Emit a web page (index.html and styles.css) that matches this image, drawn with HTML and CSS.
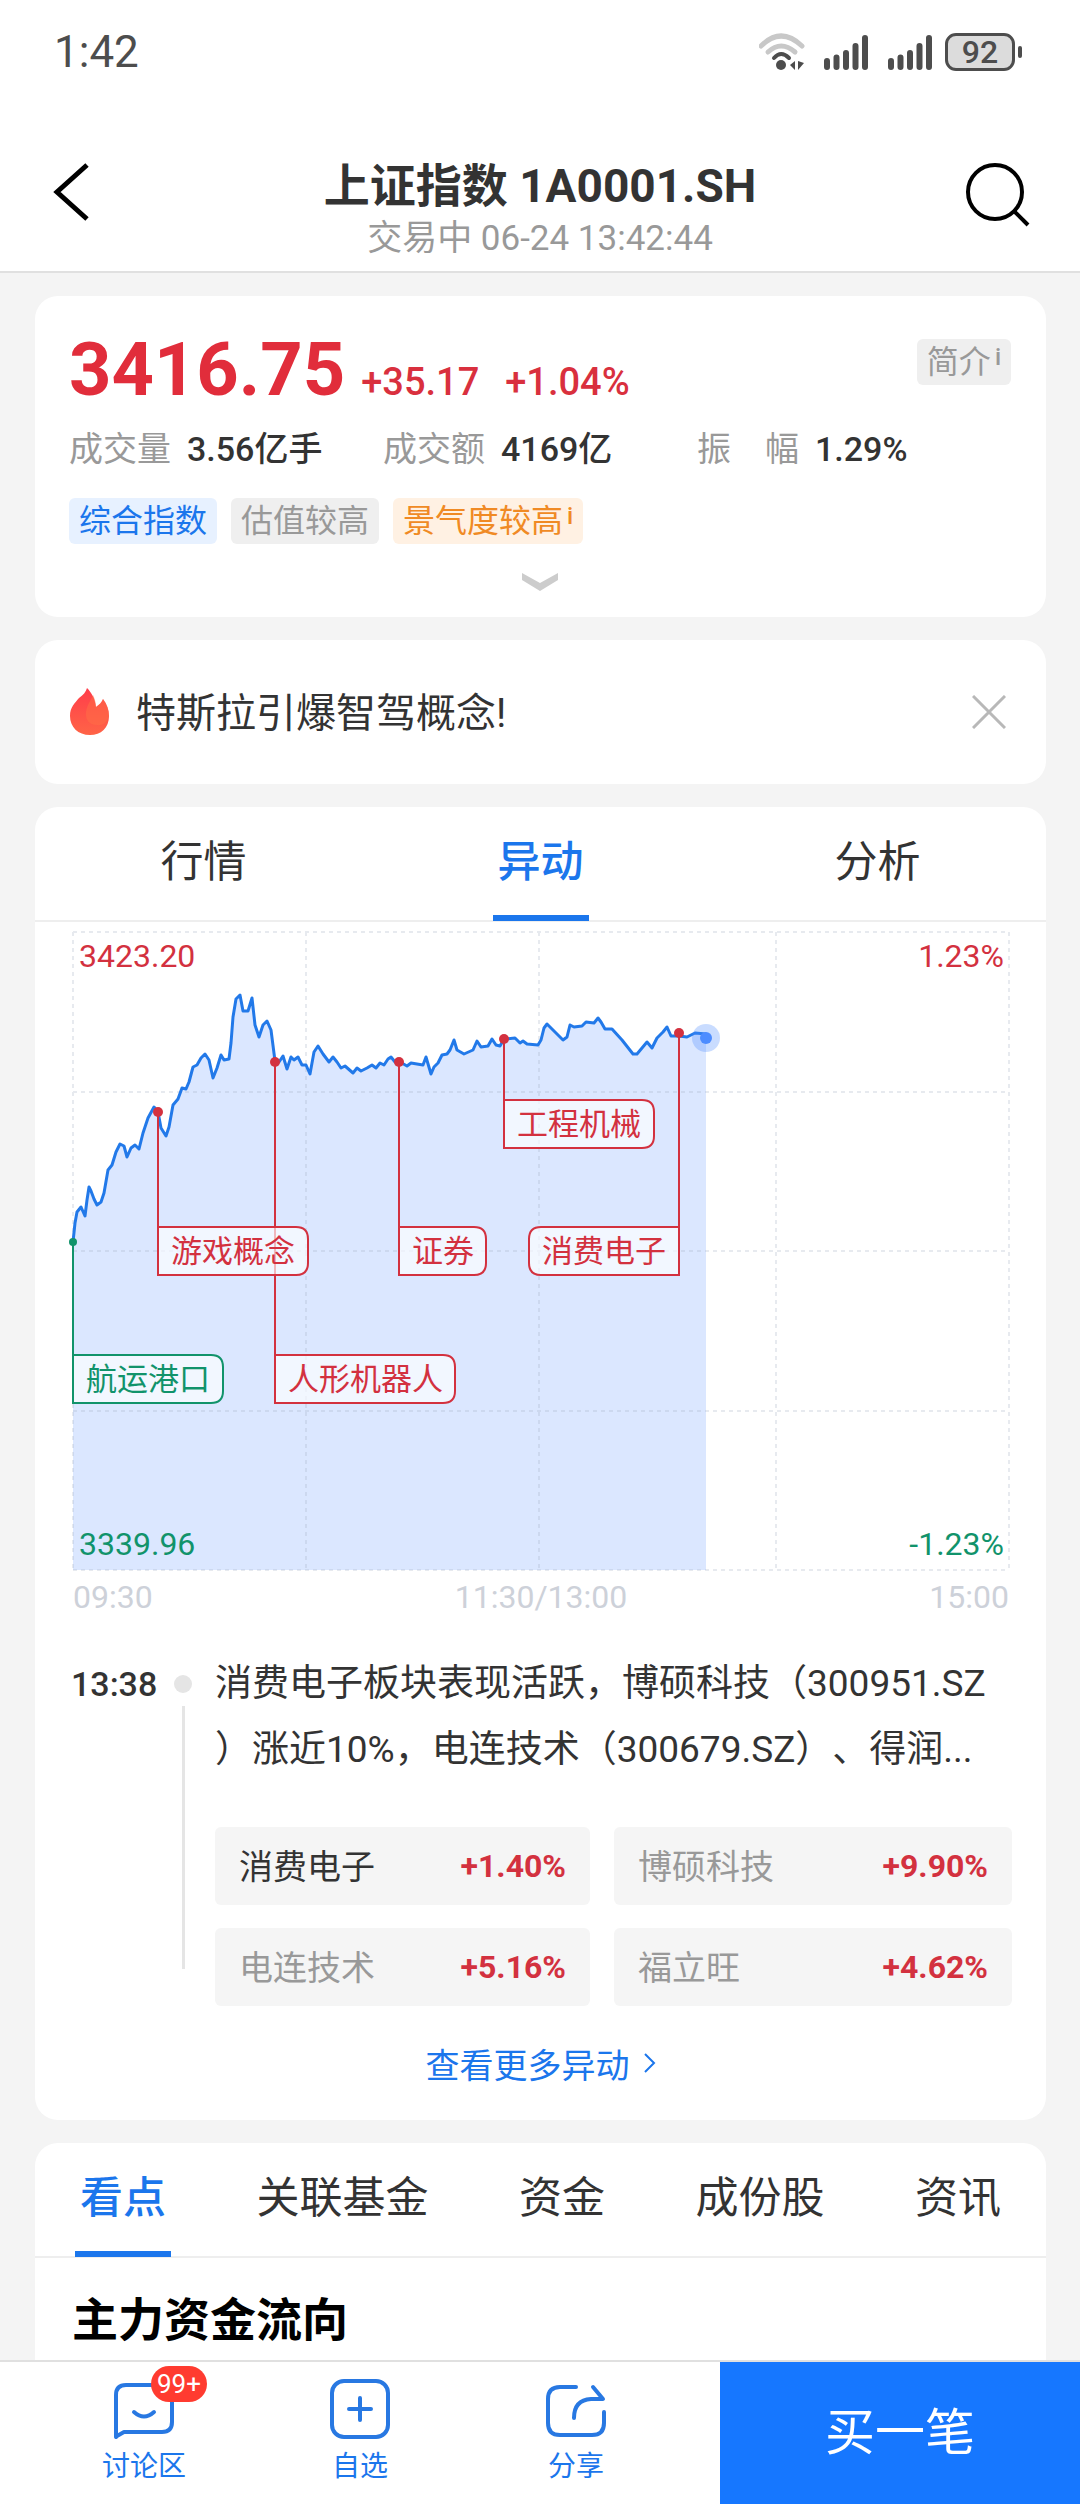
FILE: index.html
```html
<!DOCTYPE html>
<html lang="zh-CN">
<head>
    <meta charset="UTF-8">
    <meta name="viewport" content="width=device-width, initial-scale=1.0">
    <title>上证指数 1A0001.SH</title>
    <link rel="stylesheet" href="styles.css">
</head>
<body>
    <div class="status-bar">
        <span class="clock">1:42</span>
        <div class="status-icons">
            <svg width="46" height="38" viewBox="0 0 46 38" fill="none" stroke-linecap="round">
                <path d="M2 13Q22 -7 43 13" stroke="#c8c8c8" stroke-width="5"/>
                <path d="M9 19Q22 7 36 19" stroke="#c8c8c8" stroke-width="5"/>
                <path d="M15 25Q22 17 30 25" stroke="#4d4d4d" stroke-width="4"/>
                <circle cx="22" cy="32" r="5" fill="#4d4d4d"/>
                <path d="M36 28v9l-5-5zM39 28v9l6-7z" fill="#4d4d4d"/>
            </svg>
            <svg width="46" height="38" viewBox="0 0 46 38" stroke="#4d4d4d" stroke-width="6" stroke-linecap="round">
                <path d="M4 28v6M13.500 24.500v9.500M23 20v14M32.500 13v21M42 5v29"/>
            </svg>
            <svg class="signal-2" width="46" height="38" viewBox="0 0 46 38" stroke="#4d4d4d" stroke-width="6" stroke-linecap="round">
                <path d="M4 28v6M13.500 24.500v9.500M23 20v14M32.500 13v21M42 5v29"/>
            </svg>
            <div class="battery">92</div>
        </div>
    </div>

    <header class="nav">
        <button class="icon-btn" aria-label="返回">
            <svg width="66" height="66" viewBox="0 0 66 66" fill="none" stroke="#000" stroke-width="5">
                <path d="M37 3L7 30L37 57"/>
            </svg>
        </button>
        <div class="nav-title">
            <h1>上证指数 1A0001.SH</h1>
            <p>交易中 06-24 13:42:44</p>
        </div>
        <button class="icon-btn" aria-label="搜索">
            <svg width="66" height="66" viewBox="0 0 66 66" fill="none" stroke="#000" stroke-width="4">
                <circle cx="31" cy="30" r="27"/>
                <path d="M50 49L64 63"/>
            </svg>
        </button>
    </header>

    <main>
        <section class="card quote">
            <div class="quote-head">
                <span class="price">3416.75</span>
                <span class="change">+35.17</span>
                <span class="change">+1.04%</span>
                <button class="tag tag-gray intro">简介<sup>i</sup></button>
            </div>
            <dl class="stats">
                <div><dt>成交量</dt><dd>3.56亿手</dd></div>
                <div><dt>成交额</dt><dd>4169亿</dd></div>
                <div><dt>振　幅</dt><dd>1.29%</dd></div>
            </dl>
            <div class="tags">
                <span class="tag tag-blue">综合指数</span>
                <span class="tag tag-gray">估值较高</span>
                <span class="tag tag-orange">景气度较高<sup>i</sup></span>
            </div>
            <button class="expand" aria-label="展开">
                <svg width="36" height="18" viewBox="0 0 36 18" fill="#ccc">
                    <path d="M0 0L18 10L36 0V7L18 18L0 7z"/>
                </svg>
            </button>
        </section>

        <section class="card notice">
            <svg width="42" height="50" viewBox="0 0 42 50">
                <defs>
                    <linearGradient id="fire" x1="0" y1="0" x2="0" y2="1">
                        <stop offset="0" stop-color="#ff3d4a"/>
                        <stop offset="1" stop-color="#ff6447"/>
                    </linearGradient>
                </defs>
                <path d="M18 1C22 5 26 11 27 20C30 18 33 15 34 12C38 17 40 23 40 29C40 41 32 48 21 48C9 48 1 40 1 29C1 20 6 16 10 11C14 8 17 5 18 1z" fill="url(#fire)"/>
                <path d="M27 20C30 18 33 15 34 12C38 17 40 23 40 29C38 36 33 39 28 38C20 38 16 32 17 25C18 18 22 13 24 8C26 12 27 16 27 20z" fill="#ff7046" opacity=".5"/>
            </svg>
            <a href="#">特斯拉引爆智驾概念!</a>
            <button class="close" aria-label="关闭">
                <svg width="34" height="34" viewBox="0 0 34 34" stroke="#b8b8b8" stroke-width="3">
                    <path d="M1 1L33 33M33 1L1 33"/>
                </svg>
            </button>
        </section>

        <section class="card">
            <nav class="tabs">
                <button>行情</button>
                <button class="active">异动</button>
                <button>分析</button>
            </nav>

            <div class="chart">
                <svg viewBox="0 0 936 638">
                    <path class="area" d="M0 310L2 291L4 280L8 275L12 284L14 268L16 255L18 259L21 267L24 273L28 270L31 261L35 238L39 233L43 220L47 212L51 214L54 225L58 216L62 213L66 217L70 201L75 186L81 175L85 180L88 196L93 204L96 195L100 173L105 167L109 156L113 157L116 150L120 135L124 133L128 126L132 122L136 128L140 146L144 136L148 123L151 128L156 127L158 111L160 85L163 67L167 63L170 79L175 79L179 66L182 93L186 105L190 93L194 89L198 98L202 129L206 130L210 124L214 137L218 125L221 128L225 125L229 133L233 133L237 142L241 120L245 114L250 122L256 130L260 125L264 130L268 136L272 134L280 141L284 136L288 139L294 136L299 133L303 136L307 131L311 133L315 127L318 125L322 130L327 130L334 134L338 131L350 133L353 125L358 142L361 135L365 131L369 123L374 122L377 118L381 108L384 118L391 122L400 118L404 109L408 115L415 114L419 107L423 113L427 114L431 107L442 106L447 111L450 109L454 112L465 113L468 108L471 96L474 92L490 108L494 105L497 93L501 95L509 94L513 90L521 91L525 86L528 90L532 97L539 97L549 108L560 122L564 122L574 110L579 116L584 106L590 100L594 95L598 104L606 104L614 105L622 101L633 102V638H0z"/>
                    <path class="grid" d="M0 0H936M0 160H936M0 319H936M0 479H936M0 638H936M0 0V638M233 0V638M466 0V638M703 0V638M936 0V638"/>
                    <polyline class="line" points="0,310 2,291 4,280 8,275 12,284 14,268 16,255 18,259 21,267 24,273 28,270 31,261 35,238 39,233 43,220 47,212 51,214 54,225 58,216 62,213 66,217 70,201 75,186 81,175 85,180 88,196 93,204 96,195 100,173 105,167 109,156 113,157 116,150 120,135 124,133 128,126 132,122 136,128 140,146 144,136 148,123 151,128 156,127 158,111 160,85 163,67 167,63 170,79 175,79 179,66 182,93 186,105 190,93 194,89 198,98 202,129 206,130 210,124 214,137 218,125 221,128 225,125 229,133 233,133 237,142 241,120 245,114 250,122 256,130 260,125 264,130 268,136 272,134 280,141 284,136 288,139 294,136 299,133 303,136 307,131 311,133 315,127 318,125 322,130 327,130 334,134 338,131 350,133 353,125 358,142 361,135 365,131 369,123 374,122 377,118 381,108 384,118 391,122 400,118 404,109 408,115 415,114 419,107 423,113 427,114 431,107 442,106 447,111 450,109 454,112 465,113 468,108 471,96 474,92 490,108 494,105 497,93 501,95 509,94 513,90 521,91 525,86 528,90 532,97 539,97 549,108 560,122 564,122 574,110 579,116 584,106 590,100 594,95 598,104 606,104 614,105 622,101 633,102"/>
                    <circle class="halo" cx="633" cy="106" r="14"/>
                    <circle class="now" cx="633" cy="106" r="6"/>

                    <g class="flag up">
                        <path d="M202 130V471H370Q382 471 382 459V435Q382 423 370 423H202"/>
                        <circle cx="202" cy="130" r="5"/>
                        <text x="215" y="458">人形机器人</text>
                    </g>
                    <g class="flag up">
                        <path d="M85 180V343H223Q235 343 235 331V307Q235 295 223 295H85"/>
                        <circle cx="85" cy="180" r="5"/>
                        <text x="98" y="330">游戏概念</text>
                    </g>
                    <g class="flag up">
                        <path d="M326 130V343H401Q413 343 413 331V307Q413 295 401 295H326"/>
                        <circle cx="326" cy="130" r="5"/>
                        <text x="339" y="330">证券</text>
                    </g>
                    <g class="flag up">
                        <path d="M431 107V216H569Q581 216 581 204V180Q581 168 569 168H431"/>
                        <circle cx="431" cy="107" r="5"/>
                        <text x="444" y="203">工程机械</text>
                    </g>
                    <g class="flag up">
                        <path d="M606 101V343H468Q456 343 456 331V307Q456 295 468 295H606"/>
                        <circle cx="606" cy="101" r="5"/>
                        <text x="469" y="330">消费电子</text>
                    </g>
                    <g class="flag down">
                        <path d="M0 310V471H138Q150 471 150 459V435Q150 423 138 423H0"/>
                        <circle cx="0" cy="310" r="4"/>
                        <text x="13" y="458">航运港口</text>
                    </g>

                    <text class="scale up" x="6" y="35">3423.20</text>
                    <text class="scale up end" x="931" y="35">1.23%</text>
                    <text class="scale down" x="6" y="623">3339.96</text>
                    <text class="scale down end" x="931" y="623">-1.23%</text>
                </svg>
                <div class="axis">
                    <span>09:30</span>
                    <span>11:30/13:00</span>
                    <span>15:00</span>
                </div>
            </div>

            <div class="event">
                <time>13:38</time>
                <div class="timeline"></div>
                <div class="event-body">
                    <p>消费电子板块表现活跃，博硕科技（300951.SZ）涨近10%，电连技术（300679.SZ）、得润...</p>
                    <div class="stocks">
                        <a href="#" class="sector"><span>消费电子</span><b>+1.40%</b></a>
                        <a href="#"><span>博硕科技</span><b>+9.90%</b></a>
                        <a href="#"><span>电连技术</span><b>+5.16%</b></a>
                        <a href="#"><span>福立旺</span><b>+4.62%</b></a>
                    </div>
                </div>
            </div>
            <a href="#" class="more">查看更多异动
                <svg width="12" height="20" viewBox="0 0 12 20" fill="none" stroke="#1b76ec" stroke-width="2">
                    <path d="M1 1L10 10L1 19"/>
                </svg>
            </a>
        </section>

        <section class="card info">
            <nav class="tabs tabs-scroll">
                <button class="active">看点</button>
                <button>关联基金</button>
                <button>资金</button>
                <button>成份股</button>
                <button>资讯</button>
            </nav>
            <h2>主力资金流向</h2>
        </section>
    </main>

    <footer class="bottom-bar">
        <div class="actions">
            <button>
                <span class="icon">
                    <svg width="60" height="60" viewBox="0 0 60 60">
                        <path d="M2 58V16Q2 6 12 6H48Q58 6 58 16V43Q58 53 48 53H10L3 57z"/>
                        <path d="M20 33Q30 42 40 33"/>
                    </svg>
                    <span class="badge">99+</span>
                </span>
                讨论区
            </button>
            <button>
                <span class="icon">
                    <svg width="60" height="60" viewBox="0 0 60 60">
                        <rect x="2" y="2" width="56" height="56" rx="12"/>
                        <path d="M30 19V41M19 30H41"/>
                    </svg>
                </span>
                自选
            </button>
            <button>
                <span class="icon">
                    <svg width="60" height="60" viewBox="0 0 60 60">
                        <path d="M30 8H14Q2 8 2 20V44Q2 56 14 56H46Q58 56 58 44V33"/>
                        <path d="M47 8L57 20H45Q28 21 28 39"/>
                    </svg>
                </span>
                分享
            </button>
        </div>
        <button class="buy">买一笔</button>
    </footer>
</body>
</html>
```
FILE: styles.css
```css
* {
    margin: 0;
    padding: 0;
    box-sizing: border-box;
}
body {
    min-height: 100vh;
    display: flex;
    flex-direction: column;
    background: #f4f4f4;
    color: #333;
    font-family: Roboto, "Noto Sans CJK SC", sans-serif;
    font-size: 34px;
}
button {
    border: none;
    background: none;
    color: inherit;
    font-family: inherit;
    font-size: inherit;
    cursor: pointer;
}
a {
    color: inherit;
    text-decoration: none;
}
svg {
    display: block;
}

/* status bar */
.status-bar {
    display: flex;
    justify-content: space-between;
    align-items: center;
    height: 104px;
    padding: 0 65px 0 54px;
    background: #fff;
    color: #4d4d4d;
}
.clock {
    font-size: 44px;
}
.status-icons {
    display: flex;
    align-items: center;
    gap: 18px;
}
.signal-2 {
    margin-right: -6px;
}
.battery {
    position: relative;
    width: 70px;
    height: 38px;
    border: 3px solid #4d4d4d;
    border-radius: 11px;
    background: #dcdcdc;
    font-size: 32px;
    font-weight: 500;
    line-height: 33px;
    text-align: center;
}
.battery::after {
    content: "";
    position: absolute;
    top: 10px;
    right: -10px;
    width: 4px;
    height: 12px;
    border-radius: 2px;
    background: #4d4d4d;
}

/* title bar */
.nav {
    display: flex;
    justify-content: space-between;
    height: 169px;
    padding: 58px 50px 0;
    border-bottom: 2px solid #e0e0e0;
    background: #fff;
}
.icon-btn {
    width: 66px;
    height: 66px;
}
.nav-title {
    text-align: center;
}
.nav-title h1 {
    font-size: 46px;
    font-weight: 700;
    line-height: 48px;
}
.nav-title p {
    margin-top: 6px;
    color: #999;
    font-size: 35px;
    line-height: 46px;
}

main {
    flex: 1;
    display: flex;
    flex-direction: column;
    gap: 23px;
    padding: 23px 34px 0 35px;
}
.card {
    border-radius: 23px;
    background: #fff;
}

/* quote */
.quote {
    padding: 43px 35px 26px 34px;
}
.quote-head {
    display: flex;
    align-items: flex-end;
    height: 62px;
    color: #d9303e;
}
.price {
    margin-right: 16px;
    color: #e12d3b;
    font-size: 74px;
    font-weight: 700;
    line-height: 62px;
}
.change {
    margin-right: 26px;
    font-size: 38px;
    font-weight: 500;
    line-height: 38px;
}
.intro {
    align-self: flex-start;
    margin-left: auto;
}
.stats {
    display: grid;
    grid-template-columns: repeat(3, 1fr);
    margin-top: 25px;
    line-height: 46px;
}
.stats div {
    display: flex;
    gap: 16px;
}
.stats dt {
    color: #999;
}
.stats dd {
    font-weight: 500;
}
.tags {
    display: flex;
    gap: 14px;
    margin-top: 26px;
}
.tag {
    height: 46px;
    padding: 0 10px;
    border-radius: 6px;
    font-size: 32px;
    line-height: 46px;
    white-space: nowrap;
}
.tag sup {
    margin-left: 4px;
    font-size: 24px;
    font-weight: 500;
    line-height: 24px;
    vertical-align: 8px;
}
.tag-blue {
    background: #e7f1ff;
    color: #1b76ec;
}
.tag-gray {
    background: #efefef;
    color: #999;
}
.tag-orange {
    background: #fff1e3;
    color: #f08a24;
}
.expand {
    display: block;
    margin: 29px auto 0;
}

/* notice */
.notice {
    display: flex;
    align-items: center;
    height: 144px;
    padding: 0 40px 0 34px;
}
.notice a {
    flex: 1;
    margin-left: 25px;
    padding-bottom: 4px;
    font-size: 40px;
}

/* tabs */
.tabs {
    display: flex;
    height: 115px;
    border-bottom: 2px solid #eee;
}
.tabs button {
    position: relative;
    flex: 1;
    height: 114px;
    padding-bottom: 12px;
    font-size: 43px;
}
.tabs .active {
    color: #1b76ec;
    font-weight: 500;
}
.tabs .active::after {
    content: "";
    position: absolute;
    bottom: 0;
    left: 50%;
    width: 96px;
    height: 6px;
    margin-left: -48px;
    background: #1b76ec;
}
.tabs-scroll {
    justify-content: space-between;
    padding: 0 45px;
}
.tabs-scroll button {
    flex: none;
}

/* chart */
.chart {
    padding: 10px 37px 0 38px;
}
.chart svg {
    width: 100%;
    overflow: visible;
}
.area {
    fill: #dbe7ff;
}
.grid {
    fill: none;
    stroke: #a0aabe;
    stroke-opacity: .25;
    stroke-width: 2;
    stroke-dasharray: 4 4;
}
.line {
    fill: none;
    stroke: #2279e9;
    stroke-width: 3;
    stroke-linejoin: round;
}
.halo {
    fill: #4d8cff;
    opacity: .3;
}
.now {
    fill: #4d8cff;
}
.flag path {
    fill: #fff;
    fill-opacity: .65;
    stroke: currentColor;
    stroke-width: 2;
}
.flag circle, .flag text {
    fill: currentColor;
}
.flag text {
    font-size: 31px;
}
.up {
    color: #d3313f;
}
.down {
    color: #11936b;
}
.scale {
    fill: currentColor;
    font-size: 32px;
}
.end {
    text-anchor: end;
}
.axis {
    display: flex;
    justify-content: space-between;
    margin-top: 8px;
    color: #cdd1d9;
    font-size: 32px;
    line-height: 38px;
}

/* event */
.event {
    display: flex;
    margin-top: 35px;
    padding: 0 34px 0 36px;
}
.event time {
    width: 103px;
    font-weight: 500;
    line-height: 66px;
}
.timeline {
    display: flex;
    flex-direction: column;
    align-items: center;
    gap: 13px;
    width: 18px;
    margin: 24px 23px 37px 0;
}
.timeline::before {
    content: "";
    width: 18px;
    height: 18px;
    border-radius: 50%;
    background: #e5e5e5;
}
.timeline::after {
    content: "";
    flex: 1;
    width: 3px;
    background: #e5e5e5;
}
.event-body {
    flex: 1;
}
.event-body p {
    font-size: 37px;
    line-height: 66px;
    line-break: anywhere;
    text-spacing-trim: space-all;
}
.stocks {
    display: grid;
    grid-template-columns: 375fr 398fr;
    gap: 23px 24px;
    margin-top: 44px;
}
.stocks a {
    display: flex;
    justify-content: space-between;
    align-items: center;
    height: 78px;
    padding: 0 24px;
    border-radius: 6px;
    background: #f5f5f5;
    color: #999;
}
.stocks .sector {
    color: #333;
}
.stocks span {
    padding-bottom: 4px;
}
.stocks b {
    color: #d3313f;
    font-size: 32px;
    font-weight: 700;
}
.more {
    display: flex;
    justify-content: center;
    align-items: center;
    gap: 14px;
    height: 114px;
    color: #1b76ec;
}

/* info */
.info {
    flex: 1;
    border-radius: 23px 23px 0 0;
}
.info h2 {
    padding: 32px 37px 10px;
    color: #000;
    font-size: 46px;
    font-weight: 700;
    line-height: 60px;
}

/* bottom bar */
.bottom-bar {
    display: flex;
    height: 144px;
    border-top: 2px solid #e0e0e0;
    background: #fff;
}
.actions {
    flex: 1;
    display: flex;
    padding: 0 36px;
}
.actions button {
    flex: 1;
    display: flex;
    flex-direction: column;
    align-items: center;
    gap: 10px;
    padding-top: 17px;
    color: #1b76ec;
    font-size: 28px;
    line-height: 36px;
}
.icon {
    position: relative;
}
.icon svg {
    fill: none;
    stroke: #2878e2;
    stroke-width: 4;
    stroke-linecap: round;
    stroke-linejoin: round;
}
.badge {
    position: absolute;
    top: -13px;
    left: 37px;
    width: 56px;
    height: 36px;
    border-radius: 18px;
    background: #ff3b30;
    color: #fff;
    font-size: 26px;
    text-align: center;
}
.buy {
    width: calc(100% / 3);
    padding-bottom: 10px;
    background: #1677ff;
    color: #fff;
    font-size: 50px;
}
```
